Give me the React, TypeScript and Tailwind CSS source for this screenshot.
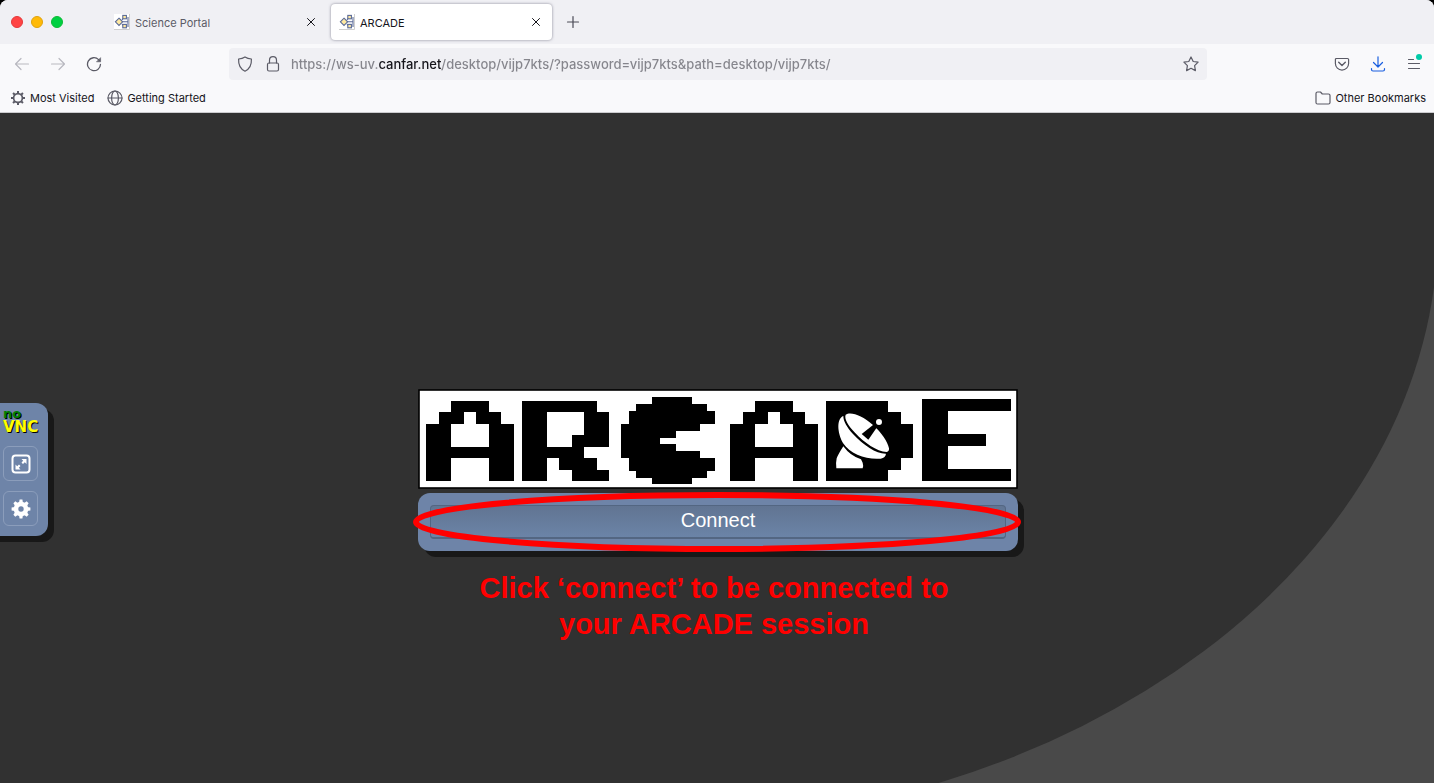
import type { ReactNode } from "react";

type IconProps = { className?: string; children: ReactNode };

function Icon({ className = "size-4", children }: IconProps) {
  return (
    <svg
      viewBox="0 0 16 16"
      className={className}
      fill="none"
      stroke="currentColor"
      strokeWidth="1.2"
      strokeLinecap="round"
      strokeLinejoin="round"
      aria-hidden="true"
    >
      {children}
    </svg>
  );
}

const gearTeeth = [0, 45, 90, 135, 180, 225, 270, 315];

function Favicon() {
  return (
    <svg viewBox="0 0 16 16" className="size-4 shrink-0" aria-hidden="true">
      <rect width="16" height="16" fill="#fff" />
      <path d="M0 15.5H15.5V0" fill="none" stroke="#cfcfcf" />
      <g fill="#ffe9a0" stroke="#5a6a98" strokeWidth="1.1">
        <path d="M8 7.8H14V3M14 7.8V13M8 5.8L9.5 4M8 10L9.5 12" fill="none" />
        <path d="M5 4.2L8.6 7.8L5 11.4L1.4 7.8Z" />
        <rect x="8.8" y="1.4" width="3.6" height="3.4" />
        <rect x="8.8" y="10.4" width="3.6" height="3.4" />
      </g>
    </svg>
  );
}

function CloseIcon() {
  return (
    <Icon className="size-4">
      <path d="M4.5 4.5L11.5 11.5M11.5 4.5L4.5 11.5" strokeWidth="1" />
    </Icon>
  );
}

function Tab({ title, active = false }: { title: string; active?: boolean }) {
  return (
    <div
      className={
        active
          ? "flex h-9 w-[221px] items-center rounded bg-white px-2 text-[#15141a] shadow-[0_0_3px_rgba(90,90,110,0.7)]"
          : "flex h-9 w-[221px] items-center rounded px-2 text-[#5b5b66]"
      }
    >
      <button role="tab" aria-selected={active} className="flex grow items-center gap-[5px] text-left">
        <Favicon />
        <span className="pt-0.5">{title}</span>
      </button>
      <button aria-label={`Close ${title}`} className="text-[#15141a]">
        <CloseIcon />
      </button>
    </div>
  );
}

function TabBar() {
  return (
    <div className="flex h-11 items-center bg-[#f0f0f4] pl-[11px] text-[11px]">
      <div className="flex gap-2">
        <button aria-label="Close window" className="size-3 rounded-full border border-[#e5383a] bg-[#ff4444]" />
        <button aria-label="Minimize window" className="size-3 rounded-full border border-[#e0a30c] bg-[#ffba08]" />
        <button aria-label="Zoom window" className="size-3 rounded-full border border-[#0cbb35] bg-[#00d042]" />
      </div>
      <div role="tablist" className="ml-[43px] flex gap-1">
        <Tab title="Science Portal" />
        <Tab title="ARCADE" active />
      </div>
      <button aria-label="New tab" className="ml-[13px] text-[#4a4a55]">
        <Icon>
          <path d="M8 2.5V13.5M2.5 8H13.5" />
        </Icon>
      </button>
    </div>
  );
}

function NavBar() {
  return (
    <div className="flex h-10 items-center pr-3 pl-3.5 text-[#5b5b66]">
      <div className="flex w-[215px] shrink-0 gap-5">
        <button aria-label="Back" className="text-[#b9b9c0]">
          <Icon>
            <path d="M1.5 8H14.5M7 2.5L1.5 8L7 13.5" />
          </Icon>
        </button>
        <button aria-label="Forward" className="text-[#b9b9c0]">
          <Icon>
            <path d="M1.5 8H14.5M9 2.5L14.5 8L9 13.5" />
          </Icon>
        </button>
        <button aria-label="Reload">
          <Icon>
            <path d="M12.6 3.6A6.5 6.5 0 1 0 14.5 8.3" strokeWidth="1.3" />
            <path d="M14.6 2V5.800H10.800Z" fill="currentColor" strokeWidth="0.6" />
          </Icon>
        </button>
      </div>
      <div className="flex h-8 min-w-0 grow items-center rounded bg-[#f0f0f4] px-2">
        <button aria-label="Tracking protection">
          <Icon>
            <path d="M8 .9C9.8 2 12 2.7 14.4 3C14.7 8.500 12.600 13 8 15.200C3.400 13 1.300 8.500 1.600 3C4 2.700 6.200 2 8 .9Z" />
          </Icon>
        </button>
        <button aria-label="Site security" className="ml-3">
          <Icon>
            <rect x="2.500" y="7" width="11" height="8" rx="1.500" />
            <path d="M4.500 7V4.200A3.500 3.500 0 0 1 11.500 4.200V7" />
          </Icon>
        </button>
        <input
          aria-label="Address"
          spellCheck={false}
          defaultValue="https://ws-uv.canfar.net/desktop/vijp7kts/?password=vijp7kts&path=desktop/vijp7kts/"
          className="ml-[10px] min-w-0 grow bg-[linear-gradient(90deg,#85858c_87px,#15141a_87px,#15141a_151px,#85858c_151px)] bg-clip-text pt-0.5 text-[13px] font-medium text-transparent outline-none"
        />
        <button aria-label="Bookmark this page">
          <Icon>
            <path d="M8 1L10.200 5.500L15.100 6.200L11.600 9.700L12.400 14.600L8 12.300L3.600 14.600L4.400 9.700L.9 6.200L5.800 5.500Z" />
          </Icon>
        </button>
      </div>
      <div className="ml-[127px] flex shrink-0 gap-5">
        <button aria-label="Save to Pocket">
          <Icon>
            <path d="M2.500 2.500H13.500Q14.600 2.500 14.600 3.600V7.500A6.600 6.600 0 0 1 1.400 7.500V3.600Q1.400 2.500 2.500 2.500Z" />
            <path d="M4.700 6.300L8 9.500L11.300 6.300" strokeWidth="1.400" />
          </Icon>
        </button>
        <button aria-label="Downloads" className="text-[#1a5fe0]">
          <Icon>
            <path d="M8 .8V10.500M3.500 6.500L8 11L12.500 6.500M1.500 12.500V13.500Q1.500 15 3 15H13Q14.500 15 14.500 13.500V12.500" />
          </Icon>
        </button>
        <button aria-label="Application menu" className="relative">
          <Icon>
            <path d="M2.500 3.500H7.500M2.500 7.500H13.500M2.500 12.500H13.500" />
          </Icon>
          <span className="absolute -top-0.5 right-0 size-1.5 rounded-full bg-[#00cba8]" />
        </button>
      </div>
    </div>
  );
}

function BookmarksBar() {
  return (
    <div className="flex h-7 items-center pr-2 pl-2.5 text-[11px] text-[#15141a]">
      <a href="#most-visited" className="flex items-center gap-1">
        <Icon className="size-4 text-[#5b5b66]">
          <circle cx="8" cy="8" r="4.400" strokeWidth="1.700" />
          {gearTeeth.map((angle) => (
            <path key={angle} d="M8 3.500V1" strokeWidth="2" strokeLinecap="butt" transform={`rotate(${angle} 8 8)`} />
          ))}
        </Icon>
        Most Visited
      </a>
      <a href="#getting-started" className="ml-[13px] flex items-center gap-1">
        <Icon className="size-4 text-[#5b5b66]">
          <circle cx="8" cy="8" r="7" />
          <ellipse cx="8" cy="8" rx="3.400" ry="7" />
          <path d="M1 8H15" />
        </Icon>
        Getting Started
      </a>
      <a href="#other-bookmarks" className="ml-auto flex items-center gap-1">
        <Icon className="size-4 text-[#5b5b66]">
          <path d="M1 3.500Q1 2 2.500 2H5.500L7.300 4H13.500Q15 4 15 5.500V12.500Q15 14 13.500 14H2.500Q1 14 1 12.500Z" />
        </Icon>
        Other Bookmarks
      </a>
    </div>
  );
}

type Sprite = { x: number; y: number; w: number; h: number; rows: string[] };

const spriteA = ["  ###  ", " ## ## ", "##   ##", "##   ##", "#######", "##   ##", "##   ##"];

const sprites: Sprite[] = [
  { x: 8, y: 11.700, w: 12.530, h: 11.500, rows: spriteA },
  {
    x: 104, y: 11.700, w: 12.480, h: 11.500,
    rows: ["###### ", "##   ##", "##   ##", "##  ###", "#####  ", "## ### ", "##  ###"],
  },
  {
    x: 202.700, y: 8.300, w: 7.890, h: 6.700,
    rows: [
      "    #####", "  #########", " ###########", " ###########", "##########", "#######", "#####",
      "#######", "##########", " ###########", " ###########", "  #########", "    #####",
    ],
  },
  { x: 312, y: 11.700, w: 12.530, h: 11.500, rows: spriteA },
  {
    x: 408.300, y: 11.700, w: 12.430, h: 11.500,
    rows: ["#####", "######", "#######", "#######", "#######", "######", "#####"],
  },
  {
    x: 504.300, y: 10.300, w: 12.670, h: 11.600,
    rows: ["#######", "##", "##", "#####", "##", "##", "#######"],
  },
];

function spriteRuns(sprite: Sprite) {
  return sprite.rows.flatMap((row, r) =>
    [...row.matchAll(/#+/g)].map((run) => ({
      x: Math.round(sprite.x + (run.index ?? 0) * sprite.w),
      y: Math.round(sprite.y + r * sprite.h),
      right: Math.round(sprite.x + ((run.index ?? 0) + run[0].length) * sprite.w),
      bottom: Math.round(sprite.y + (r + 1) * sprite.h),
    })),
  );
}

function ArcadeLogo() {
  return (
    <svg viewBox="0 0 600 100" className="block w-full" role="img" aria-label="ARCADE">
      <rect x="1" y="1" width="598" height="98" fill="#fff" stroke="#000" strokeWidth="1.600" />
      {sprites.flatMap((sprite, s) =>
        spriteRuns(sprite).map((run, i) => (
          <rect key={`${s}-${i}`} x={run.x} y={run.y} width={run.right - run.x} height={run.bottom - run.y} />
        )),
      )}
      <g transform="translate(402 -9) scale(0.3333)" fill="#fff">
        <path d="M77 104C92 94 127 106 158 134C185 158 203 184 207 205Q208 215 200 216C170 214 133 188 105 158C84 136 72 116 77 104Z" />
        <path d="M70 108C50 116 51 156 69 189C90 222 140 240 182 236Q197 233 198 221C170 222 130 196 99 162C80 141 70 123 70 108Z" />
        <path d="M70 199Q54 224 50 235Q47 248 49 265H128Q131 258 128 248L123 238Q91 228 70 199Z" />
        <circle cx="177" cy="126" r="9" />
        <path d="M160 134L125 162L145 179L171 142Z" fill="#000" />
      </g>
    </svg>
  );
}

function ControlBar() {
  return (
    <aside className="mb-px flex h-[133px] w-12 flex-col items-start rounded-r-xl bg-[#6e84a8] pt-1.5 pl-[3px] shadow-[0_6px_0_#181818,6px_6px_0_#181818]">
      <h1 className="font-[DejaVu_Sans,sans-serif] font-bold text-[#ff0] [text-shadow:1px_1px_0_#000]">
        <span className="block text-[13px] leading-[10px] text-[#008000]">no</span>
        <span className="block text-[15px] leading-4">VNC</span>
      </h1>
      <div className="mt-[11px] flex flex-col gap-2.5 text-white">
        <button aria-label="Fullscreen" className="grid size-[35px] place-items-center rounded-md border border-[#8b9dbb]">
          <svg viewBox="0 0 20 20" className="size-5" aria-hidden="true">
            <rect x="1.500" y="1.500" width="17" height="17" rx="3" fill="none" stroke="currentColor" strokeWidth="2" />
            <path
              d="M10.500 5H15.500V10L13.800 8.300L12 10L10.500 8.500L12.200 6.700ZM9.500 15.500H4.500V10.500L6.200 12.200L8 10.500L9.500 12L7.800 13.800Z"
              fill="currentColor"
            />
          </svg>
        </button>
        <button aria-label="Settings" className="grid size-[35px] place-items-center rounded-md border border-[#8b9dbb]">
          <svg viewBox="0 0 20 20" className="size-5" aria-hidden="true">
            <circle cx="10" cy="10" r="5" fill="none" stroke="currentColor" strokeWidth="4.600" />
            {gearTeeth.map((angle) => (
              <path key={angle} d="M8 4L8.600 .6H11.400L12 4Z" fill="currentColor" transform={`rotate(${angle} 10 10)`} />
            ))}
          </svg>
        </button>
      </div>
    </aside>
  );
}

function ConnectPanel() {
  return (
    <div className="relative w-[600px] max-w-full">
      <ArcadeLogo />
      <div className="relative mt-1 rounded-xl bg-[#6e84a8] p-3 shadow-[6px_6px_0_#181818]">
        <button className="h-[34px] w-full rounded border border-b-2 border-[#536682] bg-linear-to-b from-[#617492] to-[#6b84a7] pb-1 text-center font-[Liberation_Sans,Arial,sans-serif] text-xl leading-7 text-white">
          Connect
        </button>
        <svg
          viewBox="0 0 608 60"
          preserveAspectRatio="none"
          className="pointer-events-none absolute -top-px -left-[5px] h-[60px] w-[calc(100%+8px)]"
          aria-hidden="true"
        >
          <ellipse cx="304" cy="30" rx="301" ry="27" fill="none" stroke="#f00" strokeWidth="6" />
        </svg>
      </div>
      <p className="absolute inset-x-0 top-full mt-[19px] pr-2 text-center font-[Liberation_Sans,Arial,sans-serif] text-[29px] leading-9 font-bold text-[#f00]">
        Click ‘connect’ to be connected to
        <br />
        your ARCADE session
      </p>
    </div>
  );
}

export default function App() {
  return (
    <div className="flex h-screen min-h-[560px] flex-col overflow-hidden bg-black font-[Inter,sans-serif]">
      <header className="overflow-hidden rounded-t-lg border-b border-[#cccccf] bg-[#f9f9fb]">
        <TabBar />
        <NavBar />
        <BookmarksBar />
      </header>
      <main className="flex grow flex-col overflow-hidden bg-[#494949]">
        <div className="-mr-1 -mb-11 grid grow grid-cols-[54px_1fr_56px] items-center rounded-br-[800px_600px] bg-[#313131]">
          <ControlBar />
          <div className="flex justify-center">
            <ConnectPanel />
          </div>
        </div>
      </main>
    </div>
  );
}
